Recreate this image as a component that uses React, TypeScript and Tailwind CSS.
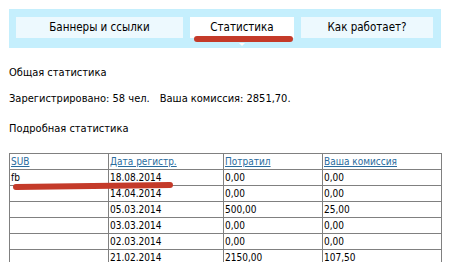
const rows = [
  { sub: "fb", date: "18.08.2014", spent: "0,00", fee: "0,00" },
  { sub: "", date: "14.04.2014", spent: "0,00", fee: "0,00" },
  { sub: "", date: "05.03.2014", spent: "500,00", fee: "25,00" },
  { sub: "", date: "03.03.2014", spent: "0,00", fee: "0,00" },
  { sub: "", date: "02.03.2014", spent: "0,00", fee: "0,00" },
  { sub: "", date: "21.02.2014", spent: "2150,00", fee: "107,50" },
];

const tabs = [
  { label: "Баннеры и ссылки", width: "w-[167px]", active: false },
  { label: "Статистика", width: "w-[104px]", active: true },
  { label: "Как работает?", width: "w-[132px]", active: false },
];

export default function App() {
  return (
    <main className="relative h-[262px] w-[457px] overflow-hidden bg-white px-[9px] pt-[9px] font-['DejaVu_Sans_Condensed','Liberation_Sans',sans-serif] text-black">
      <nav className="flex h-[39px] w-[432px] gap-[7px] bg-[#c5effd] pl-[7px] pt-[8px]">
        {tabs.map((tab) => (
          <div
            key={tab.label}
            className={`relative flex h-[21px] items-center justify-center text-[11.5px] ${tab.width} ${
              tab.active ? "bg-white" : "bg-[#edf9fe]"
            }`}
          >
            {tab.label}
            {tab.active && (
              <span className="absolute left-1/2 top-[26px] h-0 w-0 -translate-x-1/2 border-x-[3px] border-t-[3px] border-x-transparent border-t-white" />
            )}
          </div>
        ))}
      </nav>

      <h2 className="mt-[17px] text-[11px] leading-[15px]">Общая статистика</h2>
      <p className="mt-[11px] text-[11px] leading-[15px]">
        Зарегистрировано: 58 чел.<span className="inline-block w-[10px]" />Ваша комиссия: 2851,70.
      </p>
      <h2 className="mt-[15px] text-[11px] leading-[15px]">Подробная статистика</h2>

      <table className="mt-[17px] w-[432px] table-fixed border-collapse text-[10px] leading-[14px]">
        <colgroup>
          <col className="w-[99px]" />
          <col className="w-[115px]" />
          <col className="w-[99px]" />
          <col className="w-[119px]" />
        </colgroup>
        <thead>
          <tr>
            {["SUB", "Дата регистр.", "Потратил", "Ваша комиссия"].map((h) => (
              <th key={h} className="h-[16px] border border-[#808080] px-[1px] py-0 text-left font-normal">
                <a href="#" className="text-[#2a6c9e] underline">
                  {h}
                </a>
              </th>
            ))}
          </tr>
        </thead>
        <tbody>
          {rows.map((r) => (
            <tr key={r.date}>
              <td className="h-[16px] border border-[#808080] px-[1px] py-0">{r.sub}</td>
              <td className="h-[16px] border border-[#808080] px-[1px] py-0">{r.date}</td>
              <td className="h-[16px] border border-[#808080] px-[1px] py-0">{r.spent}</td>
              <td className="h-[16px] border border-[#808080] px-[1px] py-0">{r.fee}</td>
            </tr>
          ))}
        </tbody>
      </table>

      {/* red marker strokes drawn over the screenshot */}
      <svg className="pointer-events-none absolute left-0 top-0" width="457" height="262">
        <line x1="197" y1="39" x2="290" y2="39" stroke="#c43a29" strokeWidth="6" strokeLinecap="round" />
        <path d="M16 187 Q90 186 170 185" stroke="#c43a29" strokeWidth="6" strokeLinecap="round" fill="none" />
      </svg>
    </main>
  );
}
